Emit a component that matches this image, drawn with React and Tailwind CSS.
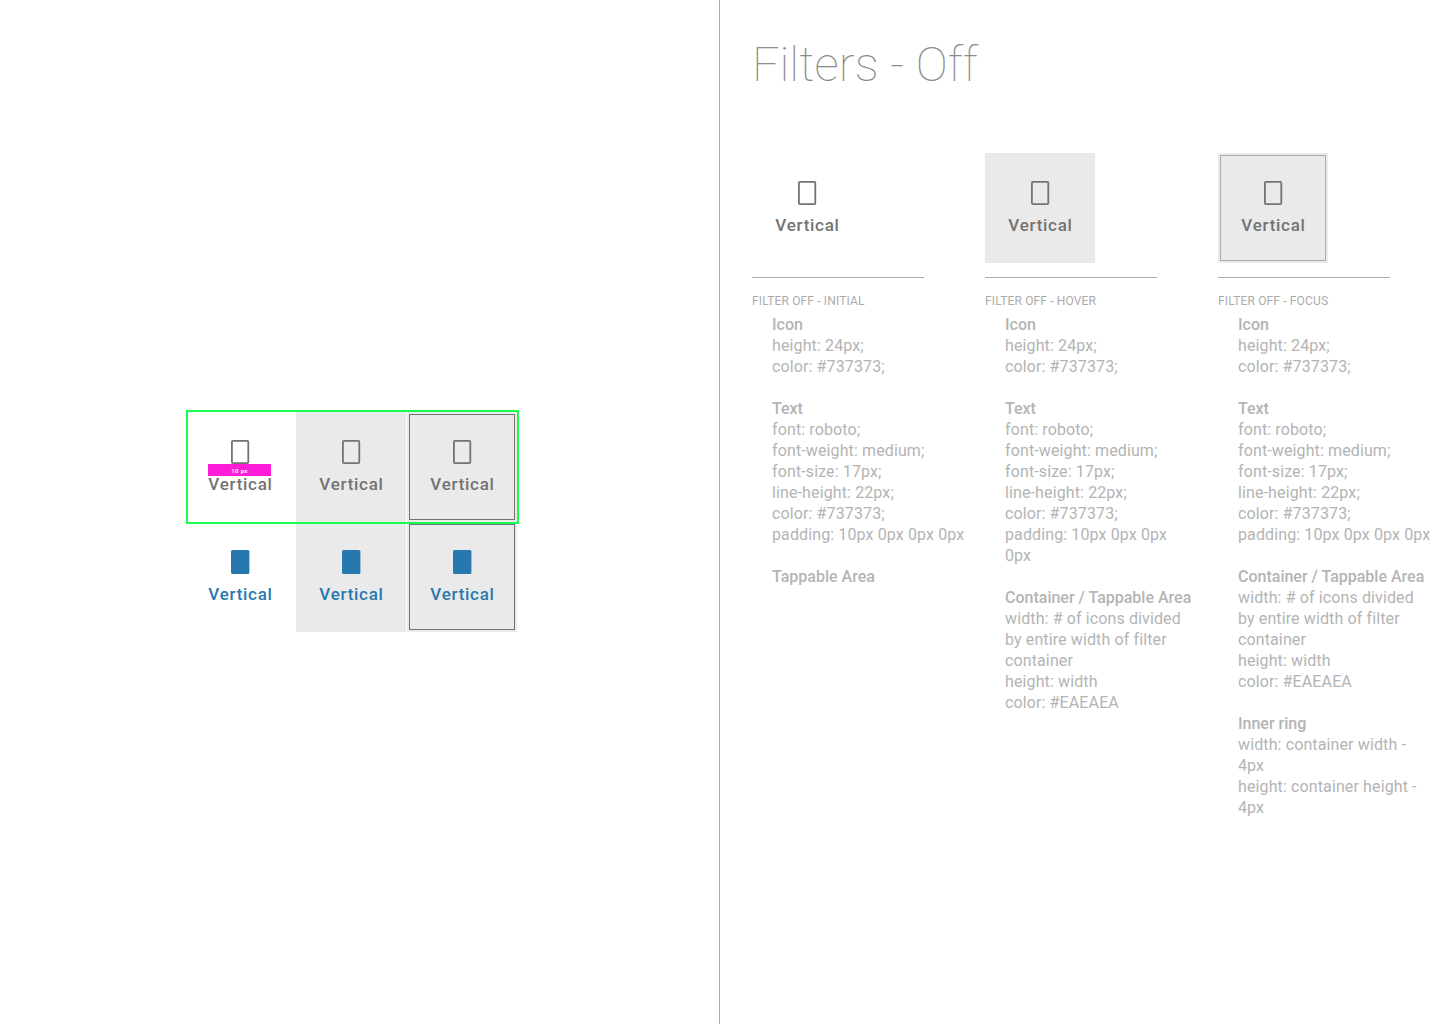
import React from "react";

// outline / filled tablet glyph used by every filter tile
function TabletIcon({ filled }) {
  return (
    <svg width="24" height="24" viewBox="0 0 24 24" className="block">
      {filled ? (
        <rect x="3" y="0" width="18.4" height="24" rx="1.6" fill="#2878B0" />
      ) : (
        <rect x="3.9" y="0.9" width="16.4" height="22.2" rx="1" fill="none" stroke="#737373" strokeWidth="1.8" />
      )}
    </svg>
  );
}

function Tile({ state = "initial", on = false, ring = "border-[#737373]" }) {
  const bg = state === "initial" ? "" : "bg-[#EAEAEA]";
  return (
    <div className={`relative w-[110px] h-[110px] flex flex-col items-center pt-[28px] ${bg}`}>
      {state === "focus" && <div className={`absolute inset-[2px] border ${ring}`} />}
      <TabletIcon filled={on} />
      <div className={`font-medium text-[17px] leading-[22px] tracking-[0.72px] pt-[9px] pl-[1px] whitespace-nowrap ${on ? "text-[#2878B0]" : "text-[#737373]"}`}>
        Vertical
      </div>
    </div>
  );
}

const icon = ["height: 24px;", "color: #737373;"];
const text = ["font: roboto;", "font-weight: medium;", "font-size: 17px;", "line-height: 22px;", "color: #737373;"];
const container = ["width: # of icons divided", "by entire width of filter", "container", "height: width", "color: #EAEAEA"];

const columns = [
  {
    state: "initial",
    label: "FILTER OFF - INITIAL",
    blocks: [
      { title: "Icon", lines: icon },
      { title: "Text", lines: [...text, "padding: 10px 0px 0px 0px"] },
      { title: "Tappable Area", lines: [] },
    ],
  },
  {
    state: "hover",
    label: "FILTER OFF - HOVER",
    blocks: [
      { title: "Icon", lines: icon },
      { title: "Text", lines: [...text, "padding: 10px 0px 0px", "0px"] },
      { title: "Container / Tappable Area", lines: container },
    ],
  },
  {
    state: "focus",
    label: "FILTER OFF - FOCUS",
    blocks: [
      { title: "Icon", lines: icon },
      { title: "Text", lines: [...text, "padding: 10px 0px 0px 0px"] },
      { title: "Container / Tappable Area", lines: container },
      {
        title: "Inner ring",
        lines: ["width: container width -", "4px", "height: container height -", "4px"],
      },
    ],
  },
];

export default function App() {
  return (
    <div className="flex w-[1440px] h-[1024px] bg-white overflow-hidden font-['Roboto',sans-serif]">
      <div className="w-[720px] shrink-0 border-r border-[#ABABAB] pl-[185px] pt-[412px]">
        <div className="relative w-[332px]">
          <div className="grid grid-cols-[110px_110px_110px] gap-x-[1px] w-[332px]">
            <div className="relative">
              <Tile state="initial" />
              <div className="absolute left-[23px] top-[52px] w-[63px] h-[12px] bg-[#FF1CD8] text-white text-[6px] tracking-[0.3px] font-bold leading-[13px] text-center">
                10 px
              </div>
            </div>
            <Tile state="hover" />
            <Tile state="focus" />
            <Tile state="initial" on />
            <Tile state="hover" on />
            <Tile state="focus" on />
          </div>
          <div className="absolute left-[1px] top-[-2px] w-[333px] h-[114px] border-2 border-[#14FF50]" />
        </div>
      </div>

      <div className="flex-1 pl-[32px]">
        <h1 className="pt-[37px] h-[153px] text-[48px] leading-[56px] font-thin text-[#8C8C8C]">Filters - Off</h1>
        <div className="flex">
          {columns.map((c) => (
            <div key={c.label} className="w-[233px] shrink-0">
              <Tile state={c.state} ring="border-[#ABABAB]" />
              <div className="w-[172px] h-px bg-[#ABABAB] mt-[14px]" />
              <div className="text-[12px] leading-[14px] tracking-[0.15px] text-[#ABABAB] mt-[16px] whitespace-nowrap">{c.label}</div>
              <div className="pl-[20px] mt-[6px] text-[16px] leading-[21px] text-[#B4B4B4] whitespace-nowrap">
                {c.blocks.map((b) => (
                  <div key={b.title} className="mb-[21px]">
                    <div className="font-medium">{b.title}</div>
                    {b.lines.map((l, i) => (
                      <div key={i} className="tracking-[0.12px]">{l}</div>
                    ))}
                  </div>
                ))}
              </div>
            </div>
          ))}
        </div>
      </div>
    </div>
  );
}
